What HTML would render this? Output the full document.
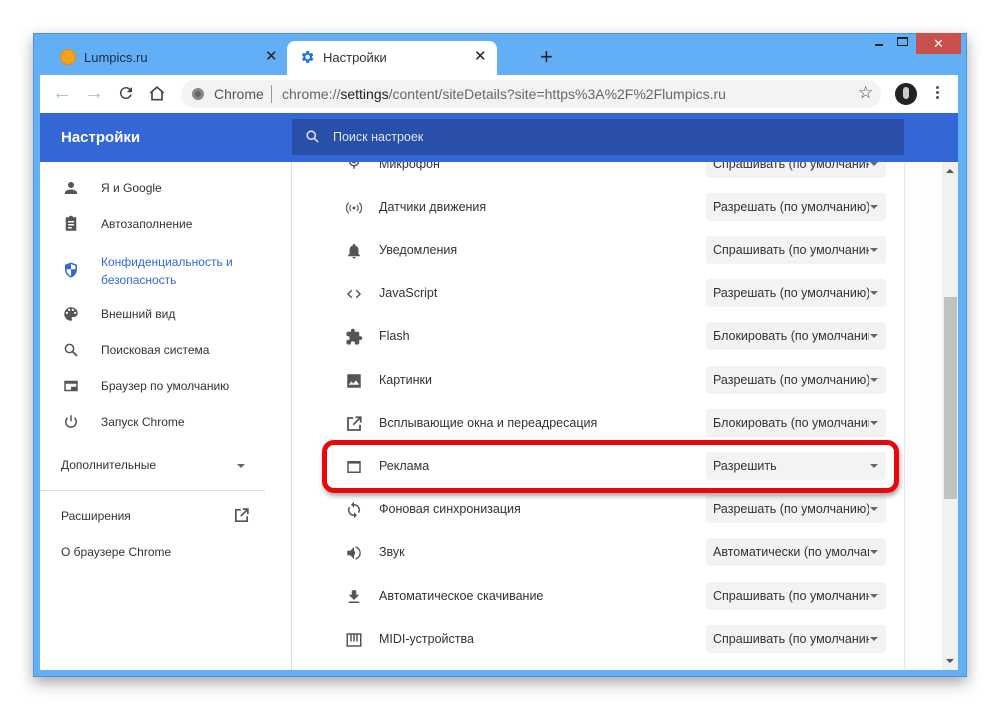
<!DOCTYPE html>
<html><head><meta charset="utf-8">
<style>
*{margin:0;padding:0;box-sizing:border-box}
body{width:1000px;height:710px;background:#fff;position:relative;overflow:hidden;font-family:"Liberation Sans","DejaVu Sans",sans-serif}
.abs{position:absolute}
#win{left:33px;top:33px;width:934px;height:644px;background:#63aff6;box-shadow:0 6px 14px rgba(0,0,0,.35);border:1px solid #4c93d8}
.txt{font-size:12.5px;color:#333;white-space:nowrap}
.side{font-size:12px;color:#333;white-space:nowrap}
.dd{left:706px;width:180px;height:28px;background:#f1f3f4;border-radius:4px;font-size:12.5px;color:#333;padding:7px 0 0 7px;white-space:nowrap;overflow:hidden}
.dd:after{content:"";position:absolute;right:8px;top:12px;border-left:4px solid transparent;border-right:4px solid transparent;border-top:4px solid #666}
.dd span{display:block;width:156px;overflow:hidden}
.ic{left:345px;width:18px;height:18px}
.si{left:62px;width:18px;height:18px}
</style></head><body>
<div id="win" class="abs"></div>
<!-- tabs -->
<div class="abs" style="left:60px;top:49px;width:16px;height:16px;border-radius:50%;background:#f7a21b;border:1px solid #e08a10"></div>
<div class="abs" style="left:84px;top:50px;font-size:13px;color:#1a2a44">Lumpics.ru</div>
<div class="abs" style="left:265px;top:47px;font-size:15px;color:#222">✕</div>
<div class="abs" style="left:287px;top:41px;width:210px;height:36px;background:#fff;border-radius:8px 8px 0 0"></div>
<svg class="abs" style="left:299px;top:49px" width="16" height="16" viewBox="0 0 24 24"><path fill="#1a73e8" d="M19.4 13a7.5 7.5 0 000-2l2.1-1.6-2-3.5-2.5 1a7 7 0 00-1.7-1L15 3h-4l-.4 2.9a7 7 0 00-1.7 1l-2.5-1-2 3.5L6.6 11a7.5 7.5 0 000 2l-2.1 1.6 2 3.5 2.5-1a7 7 0 001.7 1L11 21h4l.4-2.9a7 7 0 001.7-1l2.5 1 2-3.5zM13 15.5a3.5 3.5 0 110-7 3.5 3.5 0 010 7z"/></svg>
<div class="abs" style="left:323px;top:50px;font-size:13px;color:#333">Настройки</div>
<div class="abs" style="left:474px;top:47px;font-size:15px;color:#222">✕</div>
<div class="abs" style="left:540px;top:44px;font-size:22px;color:#222">+</div>
<div class="abs" style="left:875px;top:44px;width:8px;height:2px;background:#222"></div>
<div class="abs" style="left:897px;top:37px;width:11px;height:9px;border:1.5px solid #222;border-top-width:2.5px"></div>
<div class="abs" style="left:916px;top:33px;width:45px;height:21px;background:#c9504c;color:#fff;font-size:13px;text-align:center;line-height:21px">✕</div>
<!-- toolbar -->
<div class="abs" style="left:40px;top:75px;width:918px;height:38px;background:#fff"></div>
<div class="abs" style="left:52px;top:82px;font-size:20px;color:#bbb">←</div>
<div class="abs" style="left:84px;top:82px;font-size:20px;color:#bbb">→</div>
<svg class="abs" style="left:117px;top:84px" width="18" height="18" viewBox="0 0 24 24"><path fill="#444" d="M17.6 6.4A8 8 0 1019.7 14h-2.1a6 6 0 11-1.4-6.2L13 11h7V4z"/></svg>
<svg class="abs" style="left:147px;top:83px" width="20" height="20" viewBox="0 0 24 24"><path fill="none" stroke="#444" stroke-width="2" d="M4 12l8-7 8 7M6 10v10h12V10"/></svg>
<div class="abs" style="left:181px;top:80px;width:700px;height:28px;border-radius:14px;background:#f1f3f4"></div>
<div class="abs" style="left:192px;top:88px;width:12px;height:12px;border-radius:50%;background:#666;border:3px solid #888"></div>
<div class="abs" style="left:214px;top:86px;font-size:14px;color:#555">Chrome</div>
<div class="abs" style="left:271px;top:85px;width:1px;height:18px;background:#999"></div>
<div class="abs" style="left:282px;top:86px;font-size:14px;color:#666">chrome://<span style="color:#222">settings</span>/content/siteDetails?site=https%3A%2F%2Flumpics.ru</div>
<div class="abs" style="left:858px;top:83px;font-size:17px;color:#444">☆</div>
<div class="abs" style="left:895px;top:83px;width:22px;height:22px;border-radius:50%;background:#222"><div style="margin:4px 0 0 8px;width:6px;height:12px;border-radius:3px;background:#ccc"></div></div>
<div class="abs" style="left:936px;top:86px;width:3px;height:3px;background:#555;border-radius:50%;box-shadow:0 5px #555,0 10px #555"></div>
<!-- body -->
<div class="abs" style="left:40px;top:162px;width:918px;height:508px;background:#fff;overflow:hidden">
 <div class="abs" style="left:251px;top:0;width:1px;height:508px;background:#ddd"></div>
 <div class="abs" style="left:864px;top:0;width:1px;height:508px;background:#e4e4e4"></div>
 <div class="abs" style="left:865px;top:0;width:37px;height:508px;background:#fdfdfd"></div>
 <div class="abs" style="left:902px;top:0;width:16px;height:508px;background:#f1f1f1"></div>
 <div class="abs" style="left:904px;top:135px;width:13px;height:202px;background:#c1c1c1"></div>
 <div class="abs" style="left:906px;top:7px;border-left:4px solid transparent;border-right:4px solid transparent;border-bottom:4px solid #555"></div>
 <div class="abs" style="left:906px;top:497px;border-left:4px solid transparent;border-right:4px solid transparent;border-top:4px solid #555"></div>
</div>
<!-- microphone row (partially hidden) -->
<svg class="abs ic" style="top:153px" viewBox="0 0 24 24"><path fill="#555" d="M12 14a3 3 0 003-3V5a3 3 0 00-6 0v6a3 3 0 003 3zm5-3a5 5 0 01-10 0H5a7 7 0 006 6.9V21h2v-3.1A7 7 0 0019 11z"/></svg>
<div class="abs txt" style="left:379px;top:157px">Микрофон</div>
<div class="abs dd" style="top:150px"><span>Спрашивать (по умолчанию)</span></div>
<!-- header -->
<div class="abs" style="left:40px;top:113px;width:918px;height:49px;background:#3367d6"></div>
<div class="abs" style="left:61px;top:129px;font-size:15px;color:#fff;font-weight:bold">Настройки</div>
<div class="abs" style="left:292px;top:119px;width:612px;height:36px;background:#2a4fa8"></div>
<svg class="abs" style="left:305px;top:129px" width="15" height="15" viewBox="0 0 24 24"><circle cx="10" cy="10" r="6.5" fill="none" stroke="#dfe6f5" stroke-width="2.5"/><path d="M15 15l6 6" stroke="#dfe6f5" stroke-width="2.5"/></svg>
<div class="abs" style="left:333px;top:130px;font-size:12.5px;color:#dfe6f5">Поиск настроек</div>
<!-- sidebar -->
<svg class="abs si" style="top:179px" viewBox="0 0 24 24"><path fill="#555" d="M12 12a4 4 0 100-8 4 4 0 000 8zm0 2c-3 0-8 1.5-8 4v2h16v-2c0-2.5-5-4-8-4z"/></svg>
<div class="abs side" style="left:101px;top:181px">Я и Google</div>
<svg class="abs si" style="top:215px" viewBox="0 0 24 24"><path fill="#555" d="M19 3h-4.2A3 3 0 009.2 3H5v18h14zM8 8h8v2H8zm0 4h8v2H8zm0 4h5v2H8z"/></svg>
<div class="abs side" style="left:101px;top:217px">Автозаполнение</div>
<svg class="abs si" style="top:261px" viewBox="0 0 24 24"><path fill="#3367d6" d="M12 2L4 5v6c0 5 3.4 9.7 8 11 4.6-1.3 8-6 8-11V5z"/><path fill="#fff" d="M12 4l6 2.3V11h-6zM12 11v9c-3.4-1.1-5.8-4.8-6-9z"/></svg>
<div class="abs side" style="left:101px;top:253px;color:#3367d6;line-height:18px">Конфиденциальность и<br>безопасность</div>
<svg class="abs si" style="top:305px" viewBox="0 0 24 24"><path fill="#555" d="M12 3a9 9 0 000 18c1 0 1.5-.7 1.5-1.5 0-.4-.2-.8-.4-1-.3-.3-.4-.6-.4-1 0-.8.7-1.5 1.5-1.5H16a5 5 0 005-5c0-4.4-4-8-9-8zM6.5 12a1.5 1.5 0 110-3 1.5 1.5 0 010 3zm3-4a1.5 1.5 0 110-3 1.5 1.5 0 010 3zm5 0a1.5 1.5 0 110-3 1.5 1.5 0 010 3zm3 4a1.5 1.5 0 110-3 1.5 1.5 0 010 3z"/></svg>
<div class="abs side" style="left:101px;top:307px">Внешний вид</div>
<svg class="abs si" style="top:341px" viewBox="0 0 24 24"><circle cx="10" cy="10" r="5.5" fill="none" stroke="#555" stroke-width="2"/><path d="M14 14l6 6" stroke="#555" stroke-width="2.5"/></svg>
<div class="abs side" style="left:101px;top:343px">Поисковая система</div>
<svg class="abs si" style="top:377px" viewBox="0 0 24 24"><path fill="#555" d="M3 5h18v14H3zm2 4v8h7v-4h7V9z"/></svg>
<div class="abs side" style="left:101px;top:379px">Браузер по умолчанию</div>
<svg class="abs si" style="top:413px" viewBox="0 0 24 24"><path fill="none" stroke="#555" stroke-width="2" d="M12 3v8M7.5 6.5a7 7 0 109 0"/></svg>
<div class="abs side" style="left:101px;top:415px">Запуск Chrome</div>
<div class="abs side" style="left:61px;top:458px">Дополнительные</div>
<div class="abs" style="left:237px;top:464px;border-left:4px solid transparent;border-right:4px solid transparent;border-top:4px solid #666"></div>
<div class="abs" style="left:40px;top:490px;width:225px;height:1px;background:#ddd"></div>
<div class="abs side" style="left:61px;top:509px">Расширения</div>
<svg class="abs" style="left:233px;top:507px" width="17" height="17" viewBox="0 0 24 24"><path fill="none" stroke="#555" stroke-width="2.4" d="M11 4H4v16h16v-7M14 3h7v7M21 3L11 13"/></svg>
<div class="abs side" style="left:61px;top:545px">О браузере Chrome</div>
<!-- rows -->
<svg class="abs" style="left:345px;top:199px" width="18" height="18" viewBox="0 0 24 24"><circle cx="12" cy="12" r="2" fill="#555"/><path fill="none" stroke="#555" stroke-width="1.6" d="M8 8a5.5 5.5 0 000 8M16 8a5.5 5.5 0 010 8M5 5a9.5 9.5 0 000 14M19 5a9.5 9.5 0 010 14"/></svg>
<div class="abs txt" style="left:379px;top:200px">Датчики движения</div>
<div class="abs dd" style="top:193px"><span>Разрешать (по умолчанию)</span></div>
<svg class="abs ic" style="top:242px" viewBox="0 0 24 24"><path fill="#555" d="M12 22a2 2 0 002-2h-4a2 2 0 002 2zm6-6v-5c0-3-1.6-5.6-4.5-6.3V4a1.5 1.5 0 00-3 0v.7C7.6 5.4 6 8 6 11v5l-2 2v1h16v-1z"/></svg>
<div class="abs txt" style="left:379px;top:243px">Уведомления</div>
<div class="abs dd" style="top:236px"><span>Спрашивать (по умолчанию)</span></div>
<svg class="abs ic" style="top:285px" viewBox="0 0 24 24"><path fill="none" stroke="#555" stroke-width="2" d="M9 7l-5 5 5 5M15 7l5 5-5 5"/></svg>
<div class="abs txt" style="left:379px;top:286px">JavaScript</div>
<div class="abs dd" style="top:279px"><span>Разрешать (по умолчанию)</span></div>
<svg class="abs ic" style="top:328px" viewBox="0 0 24 24"><path fill="#555" d="M20.5 11H19V7a2 2 0 00-2-2h-4V3.5a2.5 2.5 0 00-5 0V5H4a2 2 0 00-2 2v3.8h1.5a2.7 2.7 0 010 5.4H2V20a2 2 0 002 2h3.8v-1.5a2.7 2.7 0 015.4 0V22H17a2 2 0 002-2v-4h1.5a2.5 2.5 0 000-5z"/></svg>
<div class="abs txt" style="left:379px;top:329px">Flash</div>
<div class="abs dd" style="top:322px"><span>Блокировать (по умолчанию)</span></div>
<svg class="abs ic" style="top:372px" viewBox="0 0 24 24"><path fill="#555" d="M3 3h18v18H3zm2 14h14l-4.5-6-3.5 4.5-2.5-3z"/></svg>
<div class="abs txt" style="left:379px;top:373px">Картинки</div>
<div class="abs dd" style="top:366px"><span>Разрешать (по умолчанию)</span></div>
<svg class="abs ic" style="top:415px" viewBox="0 0 24 24"><path fill="none" stroke="#555" stroke-width="2.4" d="M11 4H4v16h16v-7M14 3h7v7M21 3L11 13"/></svg>
<div class="abs txt" style="left:379px;top:416px">Всплывающие окна и переадресация</div>
<div class="abs dd" style="top:409px"><span>Блокировать (по умолчанию)</span></div>
<svg class="abs ic" style="top:458px" viewBox="0 0 24 24"><path fill="none" stroke="#555" stroke-width="2" d="M4 5h16v14H4z"/><path d="M4 6h16" stroke="#555" stroke-width="3"/></svg>
<div class="abs txt" style="left:379px;top:459px">Реклама</div>
<div class="abs dd" style="top:452px"><span>Разрешить</span></div>
<svg class="abs ic" style="top:501px" viewBox="0 0 24 24"><path fill="#555" d="M12 4V1L8 5l4 4V6a6 6 0 015.2 9l1.5 1.4A8 8 0 0012 4zm0 14a6 6 0 01-5.2-9L5.3 7.6A8 8 0 0012 20v3l4-4-4-4z"/></svg>
<div class="abs txt" style="left:379px;top:502px">Фоновая синхронизация</div>
<div class="abs dd" style="top:495px"><span>Разрешать (по умолчанию)</span></div>
<svg class="abs ic" style="top:544px" viewBox="0 0 24 24"><path fill="#555" d="M3 9v6h4l5 5V4L7 9zm10.5 3A4.5 4.5 0 0011 8v8a4.5 4.5 0 002.5-4zM14 3.2v2a7 7 0 010 13.6v2a9 9 0 000-17.6z"/></svg>
<div class="abs txt" style="left:379px;top:545px">Звук</div>
<div class="abs dd" style="top:538px"><span>Автоматически (по умолчанию)</span></div>
<svg class="abs ic" style="top:588px" viewBox="0 0 24 24"><path fill="#555" d="M19 9h-4V3H9v6H5l7 7zM5 18v2h14v-2z"/></svg>
<div class="abs txt" style="left:379px;top:589px">Автоматическое скачивание</div>
<div class="abs dd" style="top:582px"><span>Спрашивать (по умолчанию)</span></div>
<svg class="abs ic" style="top:631px" viewBox="0 0 24 24"><path fill="none" stroke="#555" stroke-width="2" d="M3 4h18v16H3z"/><path fill="#555" d="M7 4h2v10H7zm4 0h2v10h-2zm4 0h2v10h-2z"/></svg>
<div class="abs txt" style="left:379px;top:632px">MIDI-устройства</div>
<div class="abs dd" style="top:625px"><span>Спрашивать (по умолчанию)</span></div>
<!-- red highlight -->
<div class="abs" style="left:322px;top:440px;width:577px;height:53px;border:5px solid #e8070b;border-radius:12px;box-shadow:1px 3px 5px rgba(0,0,0,.35)"></div>
</body></html>
